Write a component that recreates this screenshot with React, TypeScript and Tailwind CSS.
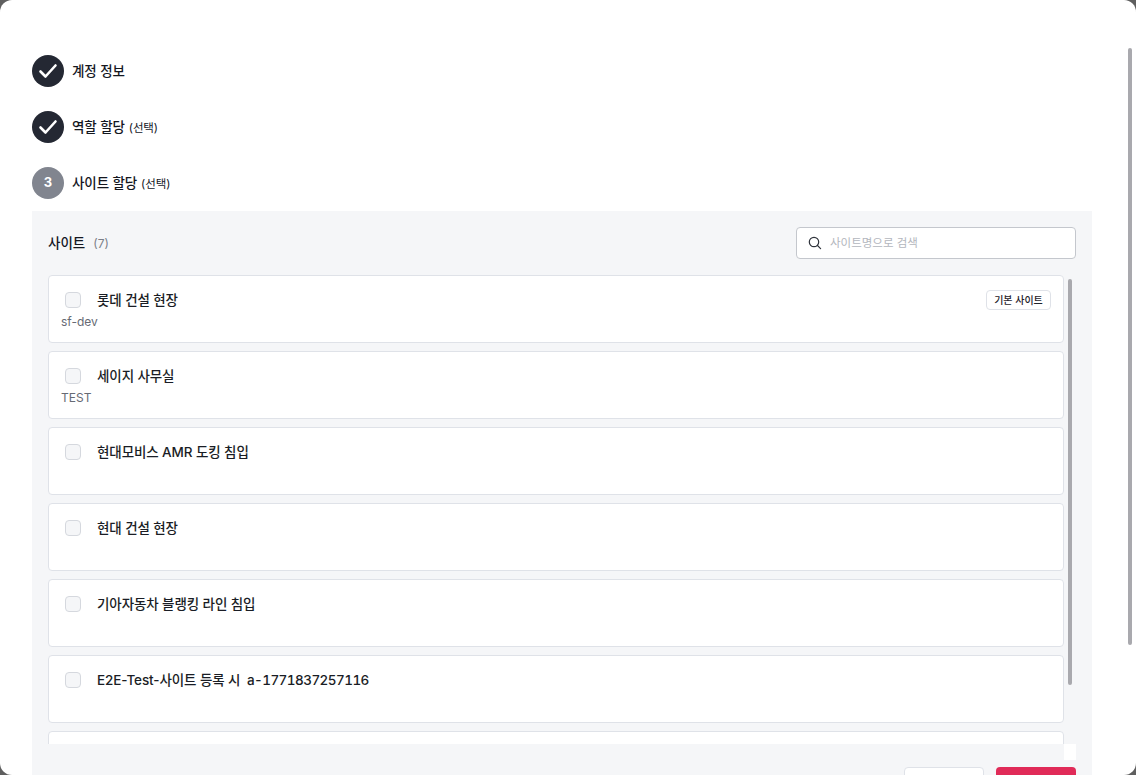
import React from "react";

const FONT = 'Inter, "Noto Sans CJK KR", "Noto Sans", sans-serif';

function Check() {
  return (
    <svg width="22" height="22" viewBox="0 0 22 22" fill="none">
      <path d="M3.5 11.5 8.5 16.5 18.5 5.5" stroke="#fff" strokeWidth="2.6" strokeLinecap="round" strokeLinejoin="round" />
    </svg>
  );
}

function Step({ mark, title, optional }: { mark: React.ReactNode; title: string; optional?: boolean }) {
  const done = mark !== "3";
  return (
    <div className="flex items-center gap-2 h-8">
      <div className={`w-8 h-8 rounded-full flex items-center justify-center text-white text-[13px] font-bold ${done ? "bg-[#242833]" : "bg-[#81858f]"}`}>
        {mark}
      </div>
      <div className="flex items-baseline gap-1 text-[#14171f]">
        <span className="text-[13.5px] font-medium tracking-[-0.1px]">{title}</span>
        {optional && <span className="text-[11.5px] tracking-[-0.1px]">(선택)</span>}
      </div>
    </div>
  );
}

const sites: { name: string; tail?: string; sub?: string; badge?: boolean }[] = [
  { name: "롯데 건설 현장", sub: "sf-dev", badge: true },
  { name: "세이지 사무실", sub: "TEST" },
  { name: "현대모비스 AMR 도킹 침입" },
  { name: "현대 건설 현장" },
  { name: "기아자동차 블랭킹 라인 침입" },
  { name: "E2E-Test-사이트 등록 시 ", tail: "a-1771837257116" },
  { name: "" },
];

function Site({ name, tail, sub, badge }: { name: string; tail?: string; sub?: string; badge?: boolean }) {
  return (
    <div className="h-[68px] shrink-0 bg-white border border-[#dfe2e8] rounded-[4px] pl-3 pr-3 pt-[14px] flex flex-col">
      <div className="flex items-center h-5 justify-between">
        <div className="flex items-center gap-4 pl-1">
          <div className="w-4 h-4 rounded-[4px] bg-[#f5f6f8] border border-[#d5d8de]" />
          <span className="text-[13.5px] font-medium text-[#1a1d25] leading-5 tracking-[-0.1px] whitespace-pre">
            {name}
            {tail && <span className="tabular-nums tracking-[-0.55px] ml-[3px]">{tail}</span>}
          </span>
        </div>
        {badge && (
          <div className="h-5 w-[65px] border border-[#dfe2e8] rounded-[4px] flex items-center justify-center text-[10px] font-medium text-[#1f232b]">
            기본 사이트
          </div>
        )}
      </div>
      {sub && <div className="text-xs text-[#666a74] leading-4 mt-[4px]">{sub}</div>}
    </div>
  );
}

export default function App() {
  return (
    <div className="w-[1136px] h-[775px] bg-[#5f5f5f] overflow-hidden" style={{ fontFamily: FONT }}>
      <div className="relative w-full h-full bg-white rounded-xl overflow-hidden pt-[55px] px-8 flex flex-col">
        <div className="flex flex-col gap-6 shrink-0">
          <Step mark={<Check />} title="계정 정보" />
          <Step mark={<Check />} title="역할 할당" optional />
          <Step mark="3" title="사이트 할당" optional />
        </div>
        <div className="relative w-[1060px] mt-3 bg-[#f5f6f8] flex-1 min-h-0 flex flex-col">
          <div className="flex items-center justify-between px-4 pt-4 h-[64px] pb-4 shrink-0">
            <div className="flex items-baseline gap-2">
              <span className="text-[13.5px] font-medium text-[#14171f]">사이트</span>
              <span className="text-xs text-[#7b7f89]">(7)</span>
            </div>
            <div className="w-[280px] h-8 bg-white border border-[#c4c7cd] rounded-[4px] flex items-center gap-2 px-[11px]">
              <svg width="14" height="14" viewBox="0 0 14 14" fill="none" stroke="#30343c" strokeWidth="1.2" strokeLinecap="round">
                <circle cx="6" cy="6" r="4.7" />
                <path d="M9.5 9.5 12.6 12.6" />
              </svg>
              <span className="text-[11.5px] text-[#b3b6bd] pt-px">사이트명으로 검색</span>
            </div>
          </div>
          <div className="pl-4 h-[469px] shrink-0 overflow-hidden w-[1032px]">
            <div className="flex flex-col gap-2">
              {sites.map((s, i) => (
                <Site key={i} {...s} />
              ))}
            </div>
          </div>
          <div className="relative flex justify-end gap-3 pr-4 pt-[23px]">
            <div className="absolute right-4 top-0 w-3 h-4 bg-white" />
            <div className="w-20 h-10 shrink-0 bg-white border border-[#dfe2e8] rounded-[4px]" />
            <div className="w-20 h-10 shrink-0 bg-[#e02b58] rounded-[4px]" />
          </div>
          <div className="absolute left-[1036px] top-[68px] w-1 h-[406px] rounded-full bg-[#a9a9ae]" />
        </div>
        <div className="absolute right-1 top-12 w-1 h-[597px] rounded-full bg-[#a9a9ae]" />
      </div>
    </div>
  );
}
